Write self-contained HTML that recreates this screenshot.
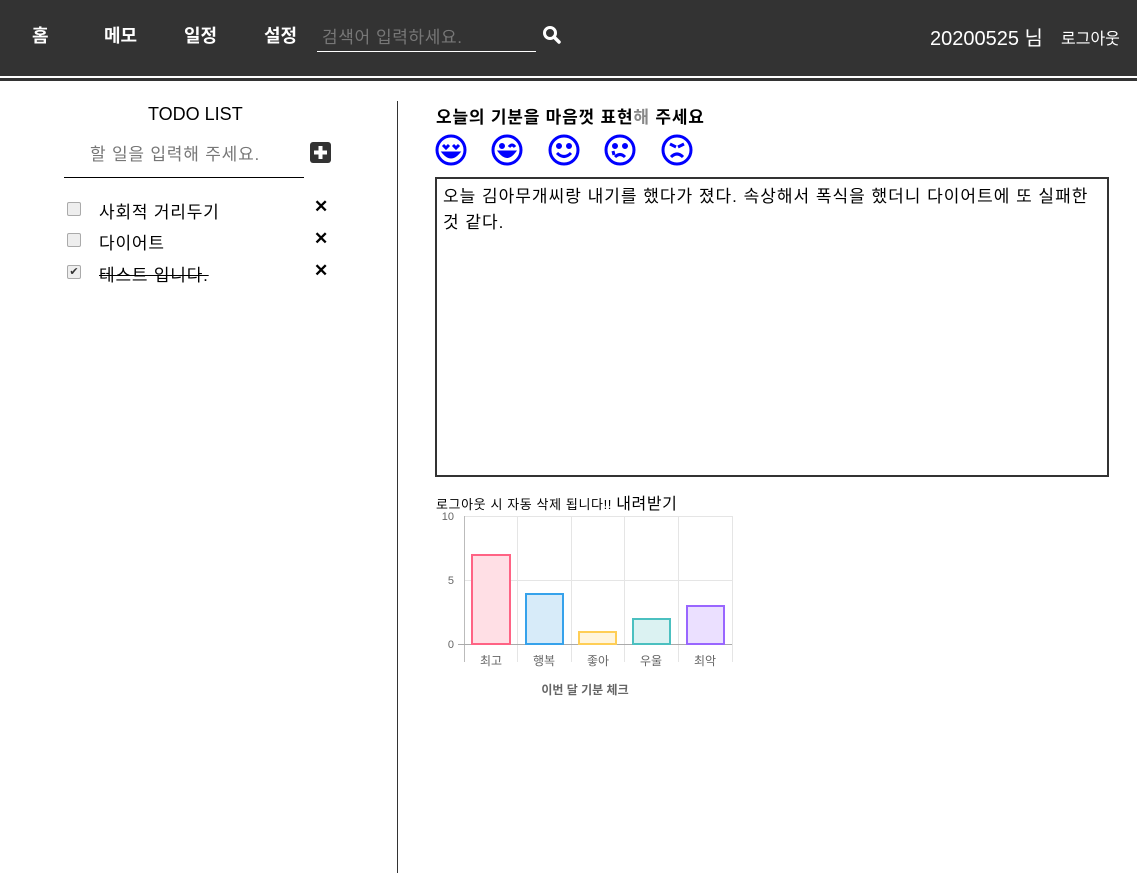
<!DOCTYPE html>
<html><head><meta charset="utf-8"><style>
*{margin:0;padding:0;box-sizing:border-box}
body{width:1137px;height:873px;background:#fff;font-family:"Liberation Sans","Noto Sans CJK KR",sans-serif;position:relative;overflow:hidden;color:#000}
.hdr{position:absolute;left:0;top:0;width:1137px;height:76px;background:#333}
.l1{position:absolute;left:0;top:76px;width:1137px;height:2px;background:#fff}
.l2{position:absolute;left:0;top:78px;width:1137px;height:3px;background:#333}
.a{position:absolute;color:#fff;font-size:18px;font-weight:bold;top:22px}
.abs{position:absolute;white-space:nowrap}
</style></head><body>
<div class="hdr"></div><div class="l1"></div><div class="l2"></div>
<div class="a" style="left:32px">홈</div>
<div class="a" style="left:104px">메모</div>
<div class="a" style="left:184px">일정</div>
<div class="a" style="left:264px">설정</div>
<div class="abs" style="left:322px;top:23px;color:#777;font-size:17px;letter-spacing:0.6px">검색어 입력하세요.</div>
<div class="abs" style="left:317px;top:51px;width:219px;height:1px;background:#fff"></div>
<svg class="abs" style="left:542px;top:25px" width="20" height="20" viewBox="0 0 20 20"><circle cx="8" cy="8" r="5.5" fill="none" stroke="#fff" stroke-width="3"/><line x1="12" y1="12" x2="17" y2="17" stroke="#fff" stroke-width="3.5" stroke-linecap="round"/></svg>
<div class="abs" style="left:930px;top:22px;color:#fff;font-size:20px">20200525 님</div>
<div class="abs" style="left:1061px;top:25px;color:#fff;font-size:16px">로그아웃</div>

<div class="abs" style="left:397px;top:101px;width:1px;height:772px;background:#333"></div>
<div class="abs" style="left:148px;top:104px;font-size:18px">TODO LIST</div>
<div class="abs" style="left:90px;top:140px;font-size:17px;color:#777;letter-spacing:0.8px">할 일을 입력해 주세요.</div>
<svg class="abs" style="left:310px;top:142px" width="21" height="21"><rect width="21" height="21" rx="3" fill="#333"/><path d="M10.5 4v13M4 10.5h13" stroke="#fff" stroke-width="4"/></svg>
<div class="abs" style="left:64px;top:177px;width:240px;height:1px;background:#000"></div>
<div class="abs" style="left:67px;top:202px;width:14px;height:14px;border:1px solid #aaa;border-radius:2px;background:#eee"></div>
<div class="abs" style="left:99px;top:198px;font-size:17px;letter-spacing:0.8px">사회적 거리두기</div>
<div class="abs" style="left:67px;top:233px;width:14px;height:14px;border:1px solid #aaa;border-radius:2px;background:#eee"></div>
<div class="abs" style="left:99px;top:229px;font-size:17px;letter-spacing:0.8px">다이어트</div>
<div class="abs" style="left:67px;top:265px;width:14px;height:14px;border:1px solid #aaa;border-radius:2px;background:#eee;font-size:11px;line-height:12px;text-align:center;color:#333">✔</div>
<div class="abs" style="left:99px;top:261px;font-size:17px;text-decoration:line-through;letter-spacing:0.8px">테스트 입니다.</div>
<div class="abs" style="left:314px;top:197px;font-size:17px;font-weight:bold">✕</div>
<div class="abs" style="left:314px;top:229px;font-size:17px;font-weight:bold">✕</div>
<div class="abs" style="left:314px;top:261px;font-size:17px;font-weight:bold">✕</div>

<div class="abs" style="left:436px;top:103px;font-size:17px;font-weight:bold;letter-spacing:0.8px">오늘의 기분을 마음껏 표현<span style="color:#888">해</span> 주세요</div>
<svg class="abs" style="left:435px;top:134px" width="260" height="32" viewBox="0 0 260 32" fill="none" stroke="#00f" stroke-width="3">
<circle cx="16" cy="16" r="14"/><path d="M9 19q7 8 14 0z" fill="#00f"/><path d="M8 11l3 3 3-3M18 11l3 3 3-3" stroke-width="3"/>
<circle cx="72" cy="16" r="14"/><path d="M65 18q7 9 14 0z" fill="#00f"/><circle cx="67" cy="12" r="1.5" fill="#00f"/><path d="M74 13q3-4 6 0"/>
<circle cx="129" cy="16" r="14"/><circle cx="124" cy="12" r="1.5" fill="#00f"/><circle cx="134" cy="12" r="1.5" fill="#00f"/><path d="M122 19q7 7 14 0"/>
<circle cx="185" cy="16" r="14"/><circle cx="180" cy="12" r="1.5" fill="#00f"/><circle cx="190" cy="12" r="1.5" fill="#00f"/><path d="M180 23q5-5 10 0"/><path d="M178 17l1 4" />
<circle cx="242" cy="16" r="14"/><path d="M235 10l6 3M249 10l-6 3"/><path d="M236 23q6-6 12 0"/>
</svg>
<div class="abs" style="left:435px;top:177px;width:674px;height:300px;border:2px solid #333"></div>
<div class="abs" style="left:443px;top:184px;font-size:17px;line-height:26px;letter-spacing:1px">오늘 김아무개씨랑 내기를 했다가 졌다. 속상해서 폭식을 했더니 다이어트에 또 실패한<br>것 같다.</div>
<div class="abs" style="left:436px;top:490px;font-size:13px;letter-spacing:0.6px">로그아웃 시 자동 삭제 됩니다!! <span style="font-size:16px">내려받기</span></div>

<svg class="abs" style="left:430px;top:508px" width="320" height="200" viewBox="0 0 320 200" font-family="Liberation Sans,Noto Sans CJK KR,sans-serif" font-size="11" fill="#666">
<g stroke="#e5e5e5" stroke-width="1">
<line x1="34" y1="8.5" x2="302" y2="8.5"/><line x1="34" y1="72.5" x2="302" y2="72.5"/>
<line x1="87.5" y1="8" x2="87.5" y2="154"/><line x1="141.5" y1="8" x2="141.5" y2="154"/><line x1="194.5" y1="8" x2="194.5" y2="154"/><line x1="248.5" y1="8" x2="248.5" y2="154"/><line x1="302.5" y1="8" x2="302.5" y2="154"/>
</g>
<line x1="34.5" y1="8" x2="34.5" y2="154" stroke="#bbb"/><line x1="28" y1="136.5" x2="302" y2="136.5" stroke="#aaa"/>
<text x="24" y="12" text-anchor="end">10</text><text x="24" y="76" text-anchor="end">5</text><text x="24" y="140" text-anchor="end">0</text>
<rect x="42" y="47" width="38" height="89" fill="#ffdfe5" stroke="#ff6384" stroke-width="2"/>
<rect x="96" y="86" width="37" height="50" fill="#d7ebf9" stroke="#36a2eb" stroke-width="2"/>
<rect x="149" y="124" width="37" height="12" fill="#fff5dd" stroke="#ffce56" stroke-width="2"/>
<rect x="203" y="111" width="37" height="25" fill="#dbf2f2" stroke="#4bc0c0" stroke-width="2"/>
<rect x="257" y="98" width="37" height="38" fill="#ebe0ff" stroke="#9966ff" stroke-width="2"/>
<g font-size="12"><text x="61" y="157" text-anchor="middle">최고</text><text x="114" y="157" text-anchor="middle">행복</text><text x="168" y="157" text-anchor="middle">좋아</text><text x="221" y="157" text-anchor="middle">우울</text><text x="275" y="157" text-anchor="middle">최악</text></g>
<text x="155" y="186" text-anchor="middle" font-weight="bold" font-size="12">이번 달 기분 체크</text>
</svg>
</body></html>
